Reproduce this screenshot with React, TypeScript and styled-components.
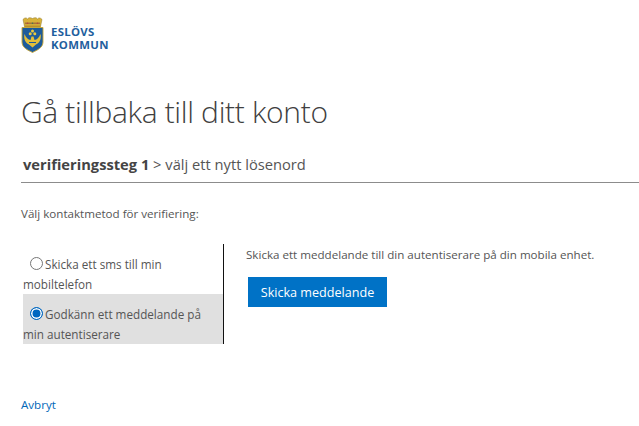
import React from "react";
import styled, { createGlobalStyle } from "styled-components";

const Global = createGlobalStyle`
  html, body { margin: 0; padding: 0; background: #fff; }
  body { font-family: "Open Sans", "Noto Sans", "Liberation Sans", sans-serif; color: #444; overflow: hidden; }
`;

const Page = styled.div`
  width: 639px;
  height: 426px;
  padding: 17px 0 0 21px;
  box-sizing: border-box;
  display: flex;
  flex-direction: column;
`;
const Brand = styled.div`
  display: flex;
  align-items: flex-start;
  gap: 7px;
  height: 36px;
`;
const BrandName = styled.div`
  font-family: "Open Sans", sans-serif;
  font-weight: 700;
  font-size: 11.4px;
  line-height: 13px;
  letter-spacing: 0.3px;
  color: #1f5f9e;
  padding-top: 8px;
`;
const Title = styled.h1`
  margin: 39px 0 0;
  font-weight: 300;
  font-size: 30px;
  line-height: 40px;
  color: #404040;
  letter-spacing: -0.34px;
`;
const Steps = styled.div`
  margin: 22px 0 0 2px;
  font-size: 14.7px;
  line-height: 20px;
  color: #555;
  height: 28px;
`;
const StepBold = styled.strong`
  font-weight: 700;
  color: #444;
`;
const Rule = styled.div`
  height: 1px;
  background: #8c8c8c;
`;
const Hint = styled.div`
  margin-top: 23px;
  font-size: 11.6px;
  line-height: 16px;
  color: #555;
`;
const Methods = styled.div`
  display: flex;
  margin: 22px 0 0 2px;
`;
const MethodList = styled.div`
  width: 200px;
  height: 100px;
  border-right: 1px solid #111;
  display: flex;
  flex-direction: column;
`;
const Method = styled.label<{ $active?: boolean }>`
  display: block;
  width: 200px;
  height: 50px;
  background: ${(p) => (p.$active ? "#e0e0e0" : "transparent")};
  font-size: 11.7px;
  line-height: 20px;
  color: #555;
  padding-top: 10px;
  box-sizing: border-box;
`;
const Radio = styled.span<{ $checked?: boolean }>`
  display: inline-block;
  width: 13px;
  height: 13px;
  margin: 0 2px 0 7px;
  vertical-align: -1px;
  box-sizing: border-box;
  border-radius: 50%;
  background: ${(p) => (p.$checked ? "#0067c0" : "#fff")};
  border: 1px solid ${(p) => (p.$checked ? "#0067c0" : "#767676")};
  box-shadow: ${(p) => (p.$checked ? "inset 0 0 0 1.5px #fff" : "none")};
`;
const Detail = styled.div`
  padding: 2px 0 0 22px;
  display: flex;
  flex-direction: column;
  align-items: flex-start;
`;
const DetailText = styled.div`
  font-size: 11.6px;
  line-height: 18px;
  color: #555;
`;
const SendButton = styled.button`
  margin: 13px 0 0 2px;
  width: 139px;
  height: 30px;
  border: 0;
  padding: 0;
  background: #0072c6;
  color: #fff;
  font: 12.6px "Open Sans", sans-serif;
`;
const Cancel = styled.a`
  margin-top: 53px;
  font-size: 11.6px;
  line-height: 16px;
  color: #0067b8;
`;

const Crest = () => (
  <svg width="23" height="36" viewBox="0 0 23 36">
    <path d="M2 2.5 C3.5 0.5 5.5 0.5 6.5 2 C7.5 0.5 9.5 0.3 11.5 1.5 C13.5 0.3 15.5 0.5 16.5 2 C17.5 0.5 19.5 0.5 21 2.5 L19.5 9.5 H3.5 Z" fill="#d8b23a" stroke="#8a7428" strokeWidth=".5" />
    <rect x="4" y="5.5" width="15" height="1.6" fill="#a9743a" />
    <circle cx="6.5" cy="6.3" r=".8" fill="#b8473a" />
    <circle cx="11.5" cy="6.3" r=".8" fill="#3d7a55" />
    <circle cx="16.5" cy="6.3" r=".8" fill="#b8473a" />
    <rect x="3.5" y="8.5" width="16" height="1.5" fill="#b98f2c" />
    <path d="M1 10.5 H22 V25 C22 31 16 33 11.5 35.5 C7 33 1 31 1 25 Z" fill="#1d5b9b" stroke="#c9a632" strokeWidth=".9" />
    <circle cx="11.5" cy="14" r="1.5" fill="#ecc93f" />
    <circle cx="9.2" cy="16.8" r="1.5" fill="#ecc93f" />
    <circle cx="13.8" cy="16.8" r="1.5" fill="#ecc93f" />
    <path d="M3.5 17 C5 21 7 22.5 9.5 23 L10.5 19.5 H12.5 L13.5 23 C16 22.5 18 21 19.5 17 C20.5 21 19 26 15 27.5 L11.5 30.5 L8 27.5 C4 26 2.5 21 3.5 17 Z" fill="#e3bf39" />
    <path d="M8 25.5 H15" stroke="#1d5b9b" strokeWidth="1" />
  </svg>
);

export default function App() {
  return (
    <Page>
      <Global />
      <Brand>
        <Crest />
        <BrandName>
          ESLÖVS
          <br />
          KOMMUN
        </BrandName>
      </Brand>
      <Title>Gå tillbaka till ditt konto</Title>
      <Steps>
        <StepBold>verifieringssteg 1</StepBold> &gt; välj ett nytt lösenord
      </Steps>
      <Rule />
      <Hint>Välj kontaktmetod för verifiering:</Hint>
      <Methods>
        <MethodList>
          <Method>
            <Radio />Skicka ett sms till min mobiltelefon
          </Method>
          <Method $active>
            <Radio $checked />Godkänn ett meddelande på min autentiserare
          </Method>
        </MethodList>
        <Detail>
          <DetailText>Skicka ett meddelande till din autentiserare på din mobila enhet.</DetailText>
          <SendButton>Skicka meddelande</SendButton>
        </Detail>
      </Methods>
      <Cancel>Avbryt</Cancel>
    </Page>
  );
}
